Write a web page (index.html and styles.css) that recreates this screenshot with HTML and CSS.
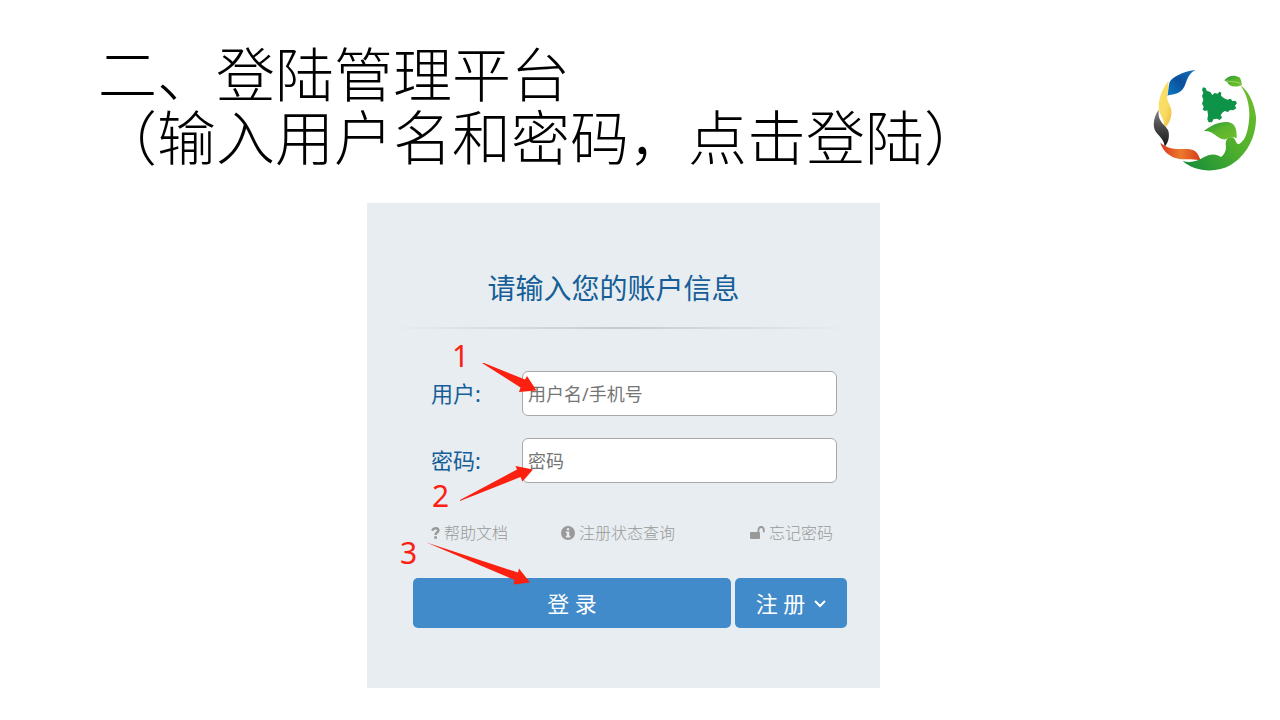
FILE: index.html
```html
<!DOCTYPE html>
<html lang="zh-CN">
<head>
    <meta charset="UTF-8">
    <meta name="viewport" content="width=device-width, initial-scale=1.0">
    <title>登陆管理平台</title>
    <link rel="stylesheet" href="styles.css">
</head>
<body>
    <header>
        <h1>二、登陆管理平台<br>（输入用户名和密码，点击登陆）</h1>
        <svg class="logo" viewBox="36 24 312 312" aria-hidden="true">
            <defs>
                <linearGradient id="blue" x1="0" y1="1" x2="1" y2="0">
                    <stop offset="0" stop-color="#0a7cc4"/>
                    <stop offset="0.5" stop-color="#0b4f9c"/>
                    <stop offset="1" stop-color="#1673b8"/>
                </linearGradient>
                <linearGradient id="yellow" x1="0" y1="0" x2="1" y2="1">
                    <stop offset="0" stop-color="#fbe06a"/>
                    <stop offset="0.6" stop-color="#f8dc62"/>
                    <stop offset="1" stop-color="#f3b43c"/>
                </linearGradient>
                <linearGradient id="black" x1="0" y1="0" x2="0" y2="1">
                    <stop offset="0" stop-color="#888888"/>
                    <stop offset="0.4" stop-color="#505050"/>
                    <stop offset="1" stop-color="#151515"/>
                </linearGradient>
                <linearGradient id="red" x1="0" y1="0" x2="1" y2="0">
                    <stop offset="0" stop-color="#d8361c"/>
                    <stop offset="0.5" stop-color="#ee7a2c"/>
                    <stop offset="1" stop-color="#d43a1a"/>
                </linearGradient>
                <linearGradient id="green" x1="0" y1="1" x2="1" y2="0">
                    <stop offset="0" stop-color="#128a3c"/>
                    <stop offset="0.5" stop-color="#4fb02c"/>
                    <stop offset="1" stop-color="#72bf2c"/>
                </linearGradient>
                <linearGradient id="leaf" x1="0" y1="0" x2="1" y2="1">
                    <stop offset="0" stop-color="#1f963c"/>
                    <stop offset="0.5" stop-color="#5cb52c"/>
                    <stop offset="1" stop-color="#6fbe2c"/>
                </linearGradient>
            </defs>
            <path fill="url(#blue)" d="M166 30C138 33 108 45 93 60C84 71 87 88 82 107C98 103 118 102 128 88C142 70 137 46 166 30Z"/>
            <path fill="url(#yellow)" d="M86 62C70 82 57 108 56 139C55 164 74 171 73 206C88 192 96 172 94 151C92 134 78 122 82 104C86 90 84 78 86 62Z"/>
            <path fill="url(#black)" d="M57 149C45 163 40 183 42 202C45 223 72 232 74 260C86 248 90 226 84 210C77 195 50 184 57 149Z"/>
            <path fill="url(#red)" d="M61 248C69 274 91 293 119 297C143 300 163 296 183 302C175 286 174 275 156 269C129 263 93 276 61 248Z"/>
            <path fill="url(#green)" d="M128 303C153 310 175 303 191 292C208 281 229 280 243 291C256 281 260 267 257 253C257 236 267 229 280 233C290 242 288 255 299 251C319 239 326 205 328 168C329 136 320 100 300 74C327 93 344 132 348 171C349 229 322 285 272 315C227 341 163 335 128 303Z"/>
            <path fill="url(#leaf)" d="M191 213C213 196 237 184 264 186C286 189 291 209 290 235C280 230 269 231 258 238C230 241 227 212 191 213Z"/>
            <path fill="url(#leaf)" d="M253 61C264 47 282 43 298 52C304 57 303 66 306 74C291 82 269 83 262 67Z"/>
            <path fill="none" stroke="#c5e48a" stroke-width="2" d="M258 62C275 67 287 62 302 72"/>
            <path fill="#0d9448" d="M189 82L197 84L200 92L211 96L217 105L224 99L233 101L238 95L244 98L243 107L251 114L262 119L272 116L277 123L286 122L291 129L285 137L289 145L279 151L270 150L264 156L254 153L247 158L242 165L246 173L239 180L231 176L220 178L216 187L206 187L202 178L204 165L202 151L195 153L188 149L191 140L186 131L190 119L186 108L190 98L186 90Z"/>
        </svg>
    </header>

    <main>
        <section class="login-panel">
            <h2>请输入您的账户信息</h2>
            <hr class="divider">
            <form>
                <div class="field">
                    <label for="username">用户:</label>
                    <input type="text" id="username" name="username" placeholder="用户名/手机号">
                </div>
                <div class="field">
                    <label for="password">密码:</label>
                    <input type="password" id="password" name="password" placeholder="密码">
                </div>
                <div class="links">
                    <a href="#">
                        <svg width="9" height="12" viewBox="0 0 9 12" aria-hidden="true">
                            <path fill="none" stroke="currentColor" stroke-width="2.4" d="M1 3.6C2 1.8 3.2 1.3 4.5 1.3C6.2 1.3 7.4 2.2 7.4 3.5C7.4 5.4 4.6 5.2 4.6 8"/>
                            <path fill="currentColor" d="M3.3 9.2h2.6v2.6H3.3z"/>
                        </svg>
                        帮助文档
                    </a>
                    <a href="#">
                        <svg width="14" height="14" viewBox="0 0 14 14" aria-hidden="true">
                            <circle cx="7" cy="7" r="7" fill="currentColor"/>
                            <path fill="#e7edf0" d="M5.8 2.2h2.5v2.1H5.8zM4.8 5.4h3.5v4.4h1v1.6H4.8V9.8h1V7h-1z"/>
                        </svg>
                        注册状态查询
                    </a>
                    <a href="#">
                        <svg width="16" height="14" viewBox="0 0 16 14" aria-hidden="true">
                            <rect x="1" y="6" width="10" height="7" rx="1" fill="currentColor"/>
                            <path fill="none" stroke="currentColor" stroke-width="1.8" stroke-linecap="round" d="M9.4 6.5V4C9.400 2 10.600 1 12 1S14.800 2 14.800 4V5.500"/>
                        </svg>
                        忘记密码
                    </a>
                </div>
                <div class="buttons">
                    <button type="submit" class="login-btn">登 录</button>
                    <button type="button" class="register-btn">
                        注 册
                        <svg width="12" height="8" viewBox="0 0 12 8" aria-hidden="true">
                            <path fill="none" stroke="currentColor" stroke-width="2" d="M1 1l5 5 5-5"/>
                        </svg>
                    </button>
                </div>
            </form>

            <!-- step numbers and arrows over the form -->
            <svg class="arrows" width="513" height="485" viewBox="0 0 513 485" aria-hidden="true">
                <path d="M115 160L117 160L158 176.500L160 173L169.500 187.500L152 189L153.500 184.500Z"/>
                <path d="M93 297L150 266.500L148.500 263L166 266.500L155.500 278.500L153.500 274L93 298Z"/>
                <path d="M59.500 339.500L151 369.500L152 365.500L163 379.500L146.500 381.500L147.500 377Z"/>
            </svg>
            <span class="step step-1">1</span>
            <span class="step step-2">2</span>
            <span class="step step-3">3</span>
        </section>
    </main>
</body>
</html>
```
FILE: styles.css
```css
body {
    margin: 0;
    background-color: #fff;
    font-family: "Noto Sans", "Noto Sans CJK SC", sans-serif;
}
header {
    display: flex;
    justify-content: space-between;
    align-items: flex-end;
    padding: 40px 24px 0 98px;
}
h1 {
    margin: 0;
    padding-bottom: 6px;
    font-family: "Noto Sans CJK SC", sans-serif;
    font-size: 59px;
    font-weight: 300;
    line-height: 63px;
    color: #000;
}
.logo {
    width: 104px;
    height: 104px;
    flex-shrink: 0;
}
main {
    padding: 31px 33px 32px 0;
}
.login-panel {
    position: relative;
    box-sizing: border-box;
    max-width: 513px;
    margin: 0 auto;
    padding: 65px 33px 60px 46px;
    background-color: #e7edf0;
}
h2 {
    margin: 0 33px 0 0;
    font-size: 28px;
    font-weight: 400;
    line-height: 40px;
    text-align: center;
    color: #165e98;
}
.divider {
    height: 2px;
    margin: 19px -4px 42px -24px;
    border: none;
    background: linear-gradient(to right, transparent, #c6cacc 50%, transparent);
}
.field {
    display: flex;
    align-items: center;
    margin: 0 10px 22px 18px;
}
.field label {
    width: 91px;
    padding-bottom: 4px;
    font-size: 22px;
    color: #165e98;
}
.field input {
    flex: 1;
    min-width: 0;
    height: 45px;
    box-sizing: border-box;
    padding: 0 5px;
    border: 1px solid #a9a9a9;
    border-radius: 6px;
    background-color: #fff;
    font-family: inherit;
    font-size: 18px;
}
.field input::placeholder {
    color: #757575;
}
.links {
    display: grid;
    grid-template-columns: 130px 1fr auto;
    margin: 38px 14px 33px 18px;
}
.links a {
    display: flex;
    align-items: center;
    gap: 4px;
    font-size: 16px;
    font-weight: 300;
    line-height: 24px;
    color: #999;
    text-decoration: none;
}
.buttons {
    display: flex;
    gap: 4px;
}
.buttons button {
    height: 50px;
    padding: 0 0 2px;
    border: none;
    border-radius: 5px;
    background-color: #428bca;
    color: #fff;
    font-family: inherit;
    font-size: 22px;
    cursor: pointer;
}
.buttons button:hover {
    background-color: #3276b1;
}
.login-btn {
    flex: 1;
}
.buttons .register-btn {
    display: flex;
    justify-content: center;
    align-items: center;
    gap: 9px;
    width: 112px;
}
.register-btn svg {
    margin-top: 4px;
}
.arrows {
    position: absolute;
    top: 0;
    left: 0;
    fill: #fb2010;
    pointer-events: none;
}
.step {
    position: absolute;
    font-size: 30px;
    line-height: 32px;
    color: #fb2010;
    pointer-events: none;
}
.step-1 {
    top: 137px;
    left: 85px;
}
.step-2 {
    top: 277px;
    left: 65px;
}
.step-3 {
    top: 334px;
    left: 33px;
}
```
